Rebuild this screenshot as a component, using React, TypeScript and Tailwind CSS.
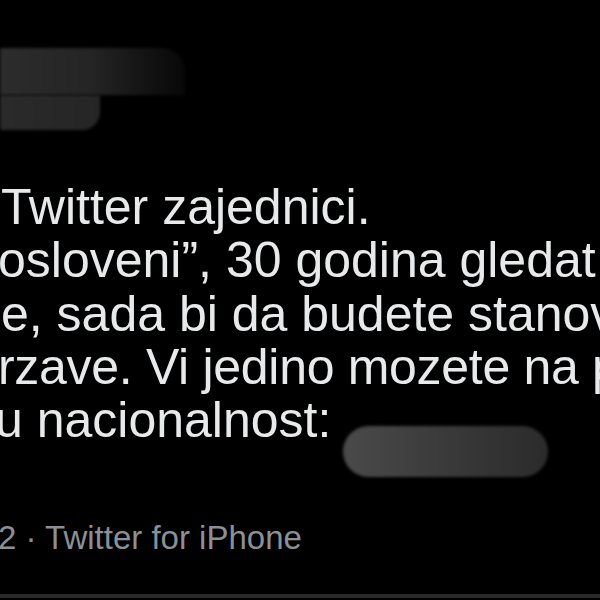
import React from "react";

export default function App() {
  const font = { fontFamily: '"Liberation Sans", Arial, sans-serif' };
  return (
    <div
      className="w-[600px] h-[600px] bg-black overflow-hidden flex flex-col"
      style={font}
    >
      {/* blurred header (avatar / name) */}
      <div className="h-[181px] pt-[48px] flex flex-col">
        <div className="w-[185px] h-[47px] rounded-tr-[24px] bg-gradient-to-r from-[#2c2c2c] via-[#242424] to-[#080808] blur-[1.5px]" />
        <div className="w-[100px] h-[35px] rounded-br-[18px] bg-gradient-to-r from-[#2a2a2a] to-[#252525] blur-[1.5px]" />
      </div>

      {/* tweet text */}
      <div className="flex flex-col text-[50px] leading-[53.33px] text-[#e7e9ea] whitespace-nowrap">
        <div className="ml-[1px]">Twitter zajednici.</div>
        <div className="ml-[-2px]">osloveni”, 30 godina gledat</div>
        <div className="ml-[1px]">e, sada bi da budete stanov</div>
        <div className="ml-[-2px] tracking-[-0.3px]">rzave. Vi jedino mozete na p</div>
        <div className="flex items-start">
          <span className="ml-[-5px]">u nacionalnost:</span>
          <div className="mt-[32px] ml-[12px] w-[205px] h-[51px] rounded-full bg-gradient-to-r from-[#4a4a4a] via-[#3a3a3a] to-[#2b2b2b] blur-[1.5px]" />
        </div>
      </div>

      {/* meta line */}
      <div className="mt-[41px] text-[33px] leading-[40px] text-[#8a9096] whitespace-nowrap">
        <span className="ml-[-2px]">2 · Twitter for iPhone</span>
      </div>

      <div className="mt-auto mb-[2px] h-[4px] bg-[#2a2a2a]" />
    </div>
  );
}
